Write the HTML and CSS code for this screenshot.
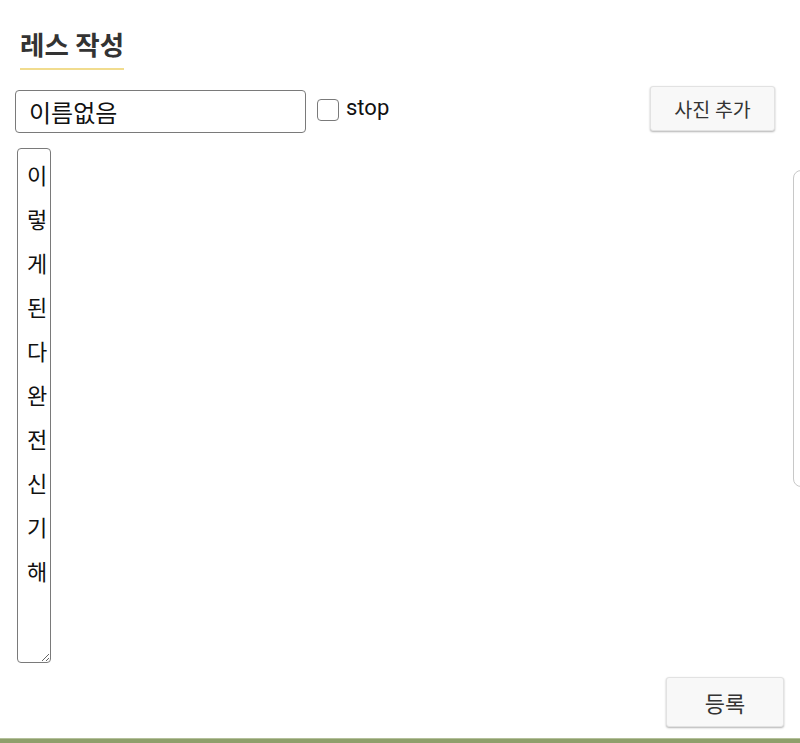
FILE: index.html
```html
<!DOCTYPE html>
<html lang="ko">
<head>
<meta charset="utf-8">
<title>레스 작성</title>
<link rel="stylesheet" href="styles.css">
</head>
<body>
<div class="page">
  <div class="main">
    <h2 class="title">레스 작성</h2>
    <div class="name-row">
      <input class="name-input" type="text" value="이름없음">
      <label class="stop"><span class="check"></span><span class="stop-text">stop</span></label>
      <button class="btn btn-photo" type="button">사진 추가</button>
    </div>
    <div class="body-row">
      <textarea class="content">이렇게된다완전신기해</textarea>
      <div class="preview"></div>
    </div>
    <div class="submit-row">
      <button class="btn btn-submit" type="button">등록</button>
    </div>
  </div>
  <div class="footer-bar"></div>
</div>
</body>
</html>
```
FILE: styles.css
```css
html, body {
  margin: 0;
  padding: 0;
  background: #fff;
}
body {
  font-family: Roboto, "Noto Sans CJK KR", sans-serif;
  color: #222;
  overflow: hidden;
}
.page {
  height: 743px;
  display: flex;
  flex-direction: column;
}
.main {
  flex: 1;
  display: flex;
  flex-direction: column;
  overflow: hidden;
}
.title {
  align-self: flex-start;
  margin: 31px 0 0 20px;
  padding: 0 0 7px;
  font-size: 26.5px;
  line-height: 30px;
  font-weight: 700;
  color: #333;
  border-bottom: 2px solid #f1dc8e;
  width: 104px;
  white-space: nowrap;
}
.name-row {
  display: flex;
  align-items: flex-start;
  margin-top: 16px;
  padding: 0 25px 0 15px;
}
.name-input {
  box-sizing: border-box;
  width: 291px;
  height: 43px;
  margin-top: 4px;
  border: 1px solid #7a7a7a;
  border-radius: 4px;
  padding: 0 13px;
  font-family: Roboto, "Noto Sans CJK KR", sans-serif;
  font-size: 24px;
  color: #111;
  outline: none;
}
.stop {
  display: flex;
  align-items: center;
  margin: 9px 0 0 11px;
  height: 30px;
}
.check {
  box-sizing: border-box;
  width: 22px;
  height: 22px;
  border: 1.5px solid #7a7a7a;
  border-radius: 4px;
  background: #fff;
}
.stop-text {
  margin-left: 7px;
  font-size: 22px;
  line-height: 26px;
  color: #111;
  margin-top: -4px;
}
.btn {
  box-sizing: border-box;
  background: #f8f8f8;
  border: 1px solid #e2e2e2;
  border-radius: 3px;
  box-shadow: 0 1px 2px rgba(0, 0, 0, 0.3);
  color: #333;
  font-family: Roboto, "Noto Sans CJK KR", sans-serif;
  padding: 0;
  cursor: pointer;
}
.btn-photo {
  margin-left: auto;
  width: 125px;
  height: 45px;
  font-size: 19.5px;
}
.body-row {
  display: flex;
  align-items: flex-start;
  margin-top: 15px;
  padding-left: 17px;
}
.content {
  box-sizing: border-box;
  width: 34px;
  height: 515px;
  border: 1px solid #7a7a7a;
  border-radius: 4px;
  padding: 6px 0 0 9px;
  font-family: Roboto, "Noto Sans CJK KR", sans-serif;
  font-size: 22px;
  line-height: 44px;
  color: #111;
  overflow: hidden;
  resize: vertical;
  outline: none;
}
.preview {
  box-sizing: border-box;
  margin: 22px -80px 0 auto;
  width: 87px;
  height: 317px;
  border: 1px solid #c8c8c8;
  border-radius: 8px;
}
.submit-row {
  display: flex;
  justify-content: flex-end;
  margin-top: 14px;
  padding-right: 16px;
}
.btn-submit {
  width: 118px;
  height: 50px;
  font-size: 22px;
}
.footer-bar {
  height: 4px;
  background: #8e9f6b;
  border-top: 1px solid #b3c09a;
}
```
